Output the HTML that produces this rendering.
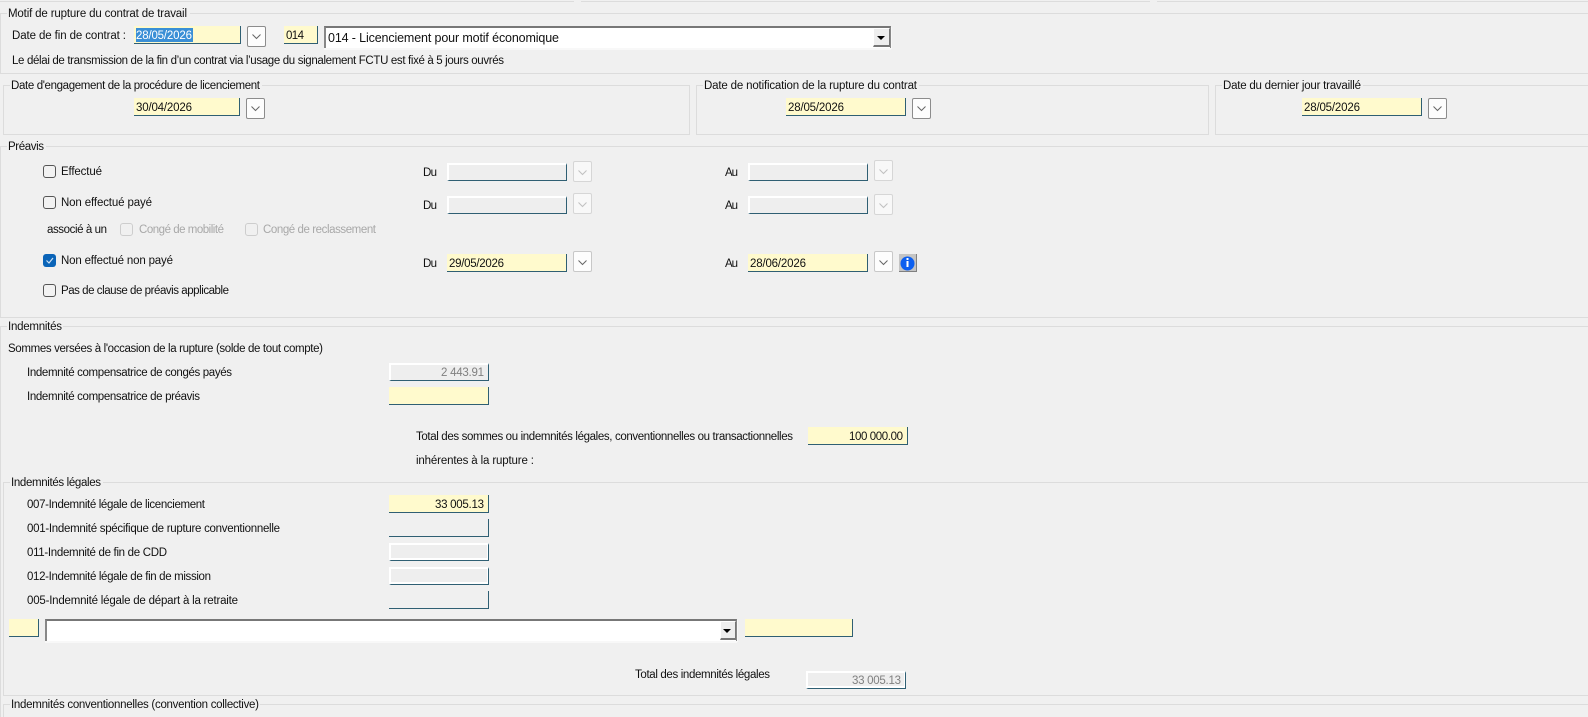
<!DOCTYPE html>
<html lang="fr"><head><meta charset="utf-8"><title>Rupture du contrat</title>
<style>
html,body{margin:0;padding:0;background:#f0f0f0}
#p{position:relative;width:1588px;height:717px;overflow:hidden;background:#f0f0f0}
#p div{position:absolute;box-sizing:border-box}
.h{height:1px;background:#dcdcdc}
.v{width:1px;background:#dcdcdc}
.f{border-right:1px solid #2f5f73;border-bottom:1px solid #2f5f73;height:18px}
.y{background:#fffacd}
.d{border-top:2px solid #fff;border-left:2px solid #fff;background:#eee}
.dw{box-shadow:inset 0 -2px 0 #fff,inset -1px 0 0 #fff}
.b{width:19px;height:21px;background:#fdfdfd;border:1px solid #8c8c8c;border-radius:2px}
.bd{border-color:#d6d6d6;background:#f8f8f8}
.c{width:13px;height:13px;border:1px solid #555;border-radius:3px;background:#f2f2f2}
.cd{border-color:#cdcdcd;background:#f0f0f0}
.cc{border:0;background:#0a64b8}
.cb{background:#fff;border-top:2px solid #777;border-left:2px solid #888;border-right:1px solid #888;box-shadow:1px 1px 0 #f8f8f8,0 2px 0 #f8f8f8}
.ab{background:#eee;border-top:1px solid #fff;border-left:1px solid #fff;border-right:1px solid #777;border-bottom:2px solid #777}
svg{position:absolute;left:0;top:0}
text{font-family:"Liberation Sans",sans-serif;font-size:11.5px;fill:#111}
.g{fill:#a8a8a8}.m{fill:#808080}
.cv{fill:none;stroke:#666;stroke-width:1}
.cl{fill:none;stroke:#c0c0c0;stroke-width:1}
</style></head><body><div id="p">

<div class="h" style="left:0;top:1px;width:574px"></div>
<div class="h" style="left:581px;top:1px;width:569px"></div>
<div class="h" style="left:1157px;top:1px;width:431px"></div>

<div class="h" style="left:0;top:13px;width:7px"></div>
<div class="h" style="left:190px;top:13px;width:1398px"></div>
<div class="v" style="left:0;top:13px;height:60px"></div>
<div class="h" style="left:0;top:73px;width:1588px"></div>

<div class="h" style="left:3px;top:85px;width:7px"></div>
<div class="h" style="left:262px;top:85px;width:427px"></div>
<div class="h" style="left:3px;top:134px;width:686px"></div>
<div class="v" style="left:3px;top:85px;height:49px"></div>
<div class="v" style="left:689px;top:85px;height:50px"></div>

<div class="h" style="left:696px;top:85px;width:7px"></div>
<div class="h" style="left:919px;top:85px;width:289px"></div>
<div class="h" style="left:696px;top:134px;width:512px"></div>
<div class="v" style="left:696px;top:85px;height:49px"></div>
<div class="v" style="left:1208px;top:85px;height:50px"></div>

<div class="h" style="left:1215px;top:85px;width:7px"></div>
<div class="h" style="left:1363px;top:85px;width:225px"></div>
<div class="h" style="left:1215px;top:134px;width:373px"></div>
<div class="v" style="left:1215px;top:85px;height:49px"></div>

<div class="h" style="left:0;top:146px;width:7px"></div>
<div class="h" style="left:46px;top:146px;width:1542px"></div>
<div class="v" style="left:0;top:146px;height:171px"></div>
<div class="h" style="left:0;top:317px;width:1588px"></div>

<div class="h" style="left:0;top:326px;width:7px"></div>
<div class="h" style="left:63px;top:326px;width:1525px"></div>
<div class="v" style="left:0;top:326px;height:391px"></div>

<div class="h" style="left:3px;top:482px;width:7px"></div>
<div class="h" style="left:103px;top:482px;width:1485px"></div>
<div class="v" style="left:3px;top:482px;height:213px"></div>
<div class="h" style="left:3px;top:695px;width:1585px"></div>
<div class="h" style="left:3px;top:704px;width:7px"></div>
<div class="h" style="left:260px;top:704px;width:1328px"></div>
<div class="v" style="left:3px;top:704px;height:13px"></div>

<div class="f y" style="left:134px;top:26px;width:107px"></div>
<div style="left:136px;top:28px;width:57px;height:14px;background:#3a8fd6"></div>
<div class="b" style="left:247px;top:26px"></div>
<div class="f y" style="left:284px;top:26px;width:34px"></div>
<div class="cb" style="left:324px;top:26px;width:567px;height:22px"></div>
<div class="ab" style="left:873px;top:28px;width:17px;height:19px"></div>

<div class="f y" style="left:134px;top:98px;width:106px"></div>
<div class="b" style="left:246px;top:98px"></div>
<div class="f y" style="left:786px;top:98px;width:120px"></div>
<div class="b" style="left:912px;top:98px"></div>
<div class="f y" style="left:1302px;top:98px;width:120px"></div>
<div class="b" style="left:1428px;top:98px"></div>

<div class="c" style="left:43px;top:165px"></div>
<div class="f d" style="left:447px;top:163px;width:120px"></div>
<div class="b bd" style="left:573px;top:161px"></div>
<div class="f d" style="left:748px;top:163px;width:120px"></div>
<div class="b bd" style="left:874px;top:160px"></div>

<div class="c" style="left:43px;top:196px"></div>
<div class="f d" style="left:447px;top:196px;width:120px"></div>
<div class="b bd" style="left:573px;top:193px"></div>
<div class="f d" style="left:748px;top:196px;width:120px"></div>
<div class="b bd" style="left:874px;top:194px"></div>

<div class="c cd" style="left:120px;top:223px"></div>
<div class="c cd" style="left:245px;top:223px"></div>

<div class="c cc" style="left:43px;top:254px"></div>
<div class="f y" style="left:447px;top:254px;width:120px"></div>
<div class="b" style="left:573px;top:251px;border-color:#c8c8c8"></div>
<div class="f y" style="left:748px;top:254px;width:120px"></div>
<div class="b" style="left:874px;top:251px;border-color:#c8c8c8"></div>
<div style="left:899px;top:254px;width:18px;height:18px;background:#c4c4c4;border-bottom:1px solid #808080;border-right:1px solid #808080"></div>

<div class="c" style="left:43px;top:284px"></div>

<div class="f d" style="left:389px;top:363px;width:100px"></div>
<div class="f y" style="left:389px;top:387px;width:100px"></div>
<div class="f y" style="left:808px;top:427px;width:100px"></div>

<div class="f y" style="left:389px;top:495px;width:100px"></div>
<div class="f" style="left:389px;top:519px;width:100px"></div>
<div class="f d dw" style="left:389px;top:543px;width:100px"></div>
<div class="f d dw" style="left:389px;top:567px;width:100px"></div>
<div class="f" style="left:389px;top:591px;width:100px"></div>

<div class="f y" style="left:9px;top:619px;width:30px"></div>
<div class="cb" style="left:45px;top:619px;width:692px;height:22px"></div>
<div class="ab" style="left:720px;top:621px;width:16px;height:19px"></div>
<div class="f y" style="left:745px;top:619px;width:108px"></div>
<div class="f d dw" style="left:806px;top:671px;width:100px"></div>

<svg width="1588" height="717" viewBox="0 0 1588 717">
<polyline class="cv" points="252.500,34.500 256.500,38.500 260.500,34.500"/>
<polyline class="cv" points="251.500,106.500 255.500,110.500 259.500,106.500"/>
<polyline class="cv" points="917.500,106.500 921.500,110.500 925.500,106.500"/>
<polyline class="cv" points="1433.500,106.500 1437.500,110.500 1441.500,106.500"/>
<polyline class="cl" points="578.500,170.500 582.500,174.500 586.500,170.500"/>
<polyline class="cl" points="879.500,169.500 883.500,173.500 887.500,169.500"/>
<polyline class="cl" points="578.500,202.500 582.500,206.500 586.500,202.500"/>
<polyline class="cl" points="879.500,203.500 883.500,207.500 887.500,203.500"/>
<polyline class="cv" points="578.500,260.500 582.500,264.500 586.500,260.500"/>
<polyline class="cv" points="879.500,260.500 883.500,264.500 887.500,260.500"/>
<polygon points="877,36 885,36 881,40" fill="#000"/>
<polygon points="723,629 731,629 727,633" fill="#000"/>
<polyline points="46.500,260.500 49,263 53,258" fill="none" stroke="#cfe2f5" stroke-width="1.200"/>
<circle cx="907.500" cy="263.500" r="7" fill="#0c5ff0"/>
<rect x="906.500" y="258" width="2" height="2" fill="#fff"/>
<rect x="906.500" y="261" width="2" height="6" fill="#fff"/>

<text x="8" y="17" textLength="179" lengthAdjust="spacing">Motif de rupture du contrat de travail</text>
<text x="12" y="39" textLength="114" lengthAdjust="spacing">Date de fin de contrat :</text>
<text x="136" y="39" textLength="56" lengthAdjust="spacing" style="fill:#fff">28/05/2026</text>
<text x="286" y="39" textLength="18" lengthAdjust="spacing">014</text>
<text x="328" y="42" textLength="231" lengthAdjust="spacing" style="font-size:12.500px">014 - Licenciement pour motif économique</text>
<text x="12" y="64" textLength="492" lengthAdjust="spacing">Le délai de transmission de la fin d’un contrat via l’usage du signalement FCTU est fixé à 5 jours ouvrés</text>

<text x="11" y="89" textLength="249" lengthAdjust="spacing">Date d'engagement de la procédure de licenciement</text>
<text x="136" y="111" textLength="56" lengthAdjust="spacing">30/04/2026</text>
<text x="704" y="89" textLength="213" lengthAdjust="spacing">Date de notification de la rupture du contrat</text>
<text x="788" y="111" textLength="56" lengthAdjust="spacing">28/05/2026</text>
<text x="1223" y="89" textLength="138" lengthAdjust="spacing">Date du dernier jour travaillé</text>
<text x="1304" y="111" textLength="56" lengthAdjust="spacing">28/05/2026</text>

<text x="8" y="150" textLength="36" lengthAdjust="spacing">Préavis</text>
<text x="61" y="175" textLength="41" lengthAdjust="spacing">Effectué</text>
<text x="423" y="176" textLength="14" lengthAdjust="spacing">Du</text>
<text x="725" y="176" textLength="13" lengthAdjust="spacing">Au</text>
<text x="61" y="206" textLength="91" lengthAdjust="spacing">Non effectué payé</text>
<text x="423" y="209" textLength="14" lengthAdjust="spacing">Du</text>
<text x="725" y="209" textLength="13" lengthAdjust="spacing">Au</text>
<text x="47" y="233" textLength="60" lengthAdjust="spacing">associé à un</text>
<text class="g" x="139" y="233" textLength="85" lengthAdjust="spacing">Congé de mobilité</text>
<text class="g" x="263" y="233" textLength="113" lengthAdjust="spacing">Congé de reclassement</text>
<text x="61" y="264" textLength="112" lengthAdjust="spacing">Non effectué non payé</text>
<text x="423" y="267" textLength="14" lengthAdjust="spacing">Du</text>
<text x="449" y="267" textLength="55" lengthAdjust="spacing">29/05/2026</text>
<text x="725" y="267" textLength="13" lengthAdjust="spacing">Au</text>
<text x="750" y="267" textLength="56" lengthAdjust="spacing">28/06/2026</text>
<text x="61" y="294" textLength="168" lengthAdjust="spacing">Pas de clause de préavis applicable</text>

<text x="8" y="330" textLength="54" lengthAdjust="spacing">Indemnités</text>
<text x="8" y="352" textLength="315" lengthAdjust="spacing">Sommes versées à l'occasion de la rupture (solde de tout compte)</text>
<text x="27" y="376" textLength="205" lengthAdjust="spacing">Indemnité compensatrice de congés payés</text>
<text class="m" x="441" y="376" textLength="43" lengthAdjust="spacing">2 443.91</text>
<text x="27" y="400" textLength="173" lengthAdjust="spacing">Indemnité compensatrice de préavis</text>
<text x="416" y="440" textLength="377" lengthAdjust="spacing">Total des sommes ou indemnités légales, conventionnelles ou transactionnelles</text>
<text x="849" y="440" textLength="54" lengthAdjust="spacing">100 000.00</text>
<text x="416" y="464" textLength="118" lengthAdjust="spacing">inhérentes à la rupture :</text>

<text x="11" y="486" textLength="90" lengthAdjust="spacing">Indemnités légales</text>
<text x="27" y="508" textLength="178" lengthAdjust="spacing">007-Indemnité légale de licenciement</text>
<text x="435" y="508" textLength="49" lengthAdjust="spacing">33 005.13</text>
<text x="27" y="532" textLength="253" lengthAdjust="spacing">001-Indemnité spécifique de rupture conventionnelle</text>
<text x="27" y="556" textLength="140" lengthAdjust="spacing">011-Indemnité de fin de CDD</text>
<text x="27" y="580" textLength="184" lengthAdjust="spacing">012-Indemnité légale de fin de mission</text>
<text x="27" y="604" textLength="211" lengthAdjust="spacing">005-Indemnité légale de départ à la retraite</text>
<text x="635" y="678" textLength="135" lengthAdjust="spacing">Total des indemnités légales</text>
<text class="m" x="852" y="684" textLength="49" lengthAdjust="spacing">33 005.13</text>
<text x="11" y="708" textLength="248" lengthAdjust="spacing">Indemnités conventionnelles (convention collective)</text>
</svg>
</div></body></html>
